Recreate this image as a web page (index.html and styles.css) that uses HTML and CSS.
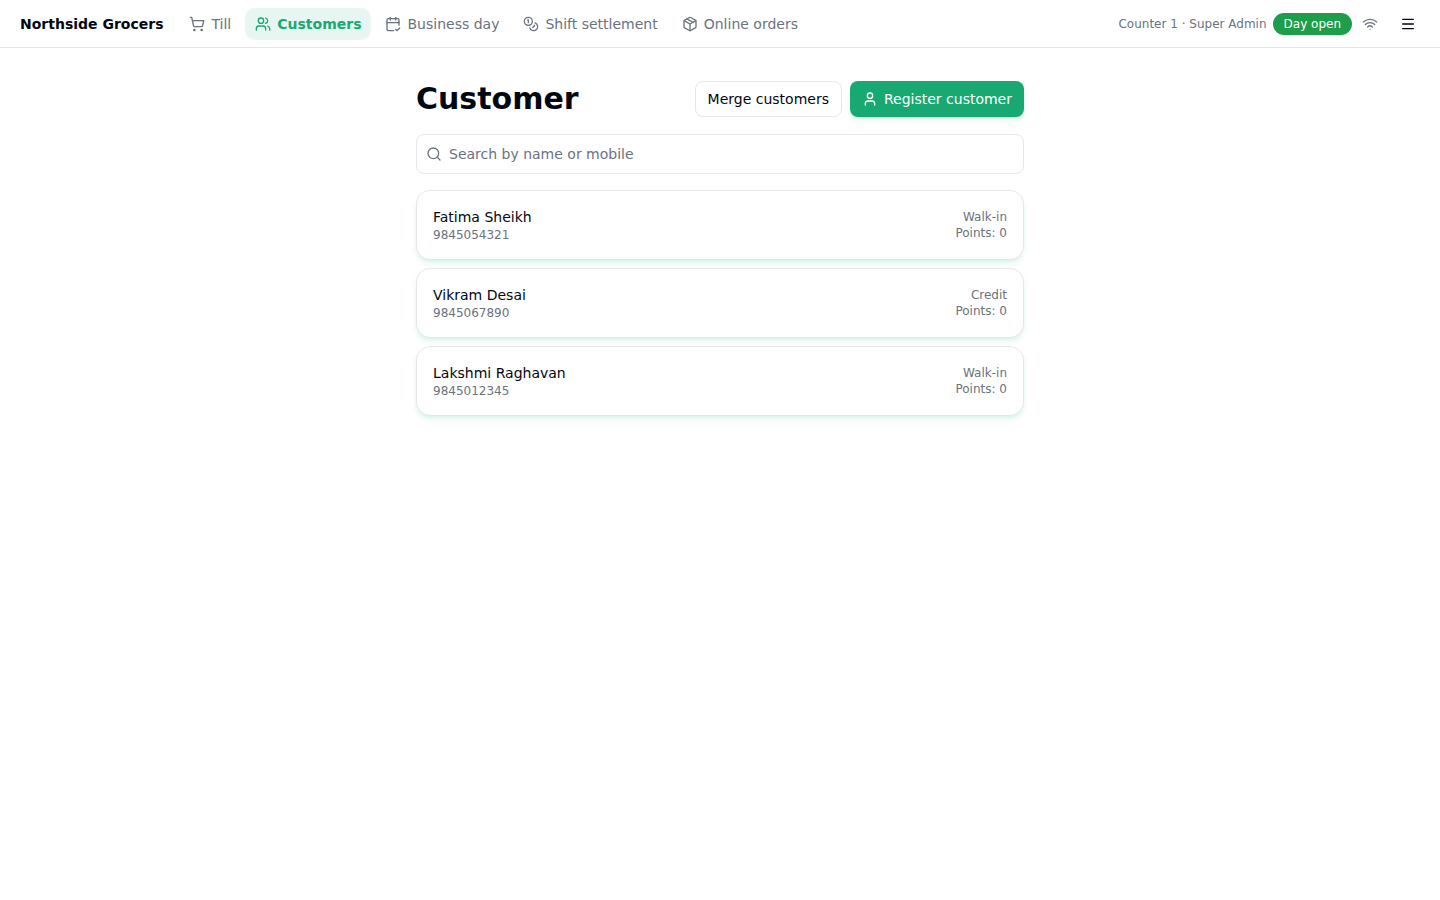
FILE: index.html
```html
<!DOCTYPE html>
<html lang="en">
<head>
<meta charset="utf-8">
<meta name="viewport" content="width=device-width, initial-scale=1">
<title>Customer · Northside Grocers</title>
<link rel="stylesheet" href="styles.css">
</head>
<body>
<header class="topbar">
  <div class="brand">Northside Grocers</div>
  <nav class="nav" aria-label="Main">
    <a class="nav-link" href="#till">
      <svg class="icon" viewBox="0 0 24 24" aria-hidden="true"><circle cx="8" cy="21" r="1"/><circle cx="19" cy="21" r="1"/><path d="M2.05 2.05h2l2.66 12.42a2 2 0 0 0 2 1.58h9.78a2 2 0 0 0 1.95-1.57l1.65-7.43H5.12"/></svg>
      Till</a>
    <a class="nav-link active" href="#customers" aria-current="page">
      <svg class="icon" viewBox="0 0 24 24" aria-hidden="true"><path d="M16 21v-2a4 4 0 0 0-4-4H6a4 4 0 0 0-4 4v2"/><circle cx="9" cy="7" r="4"/><path d="M22 21v-2a4 4 0 0 0-3-3.87"/><path d="M16 3.13a4 4 0 0 1 0 7.75"/></svg>
      Customers</a>
    <a class="nav-link" href="#business-day">
      <svg class="icon" viewBox="0 0 24 24" aria-hidden="true"><path d="M8 2v4"/><path d="M16 2v4"/><path d="M21 14V6a2 2 0 0 0-2-2H5a2 2 0 0 0-2 2v14a2 2 0 0 0 2 2h8"/><path d="M3 10h18"/><path d="m16 20 2 2 4-4"/></svg>
      Business day</a>
    <a class="nav-link" href="#shift-settlement">
      <svg class="icon" viewBox="0 0 24 24" aria-hidden="true"><circle cx="8" cy="8" r="6"/><path d="M18.09 10.37A6 6 0 1 1 10.34 18"/><path d="M7 6h1v4"/><path d="m16.71 13.88.7.71-2.82 2.82"/></svg>
      Shift settlement</a>
    <a class="nav-link" href="#online-orders">
      <svg class="icon" viewBox="0 0 24 24" aria-hidden="true"><path d="M11 21.73a2 2 0 0 0 2 0l7-4A2 2 0 0 0 21 16V8a2 2 0 0 0-1-1.73l-7-4a2 2 0 0 0-2 0l-7 4A2 2 0 0 0 3 8v8a2 2 0 0 0 1 1.73z"/><path d="M12 22V12"/><path d="M3.29 7 12 12l8.71-5"/><path d="m7.5 4.27 9 5.15"/></svg>
      Online orders</a>
  </nav>
  <div class="status">
    <span>Counter 1 · Super Admin</span>
    <span class="badge">Day open</span>
    <span class="network" role="img" aria-label="Online">
      <svg class="icon" viewBox="0 0 24 24" aria-hidden="true"><path d="M12 20h.01"/><path d="M2 8.82a15 15 0 0 1 20 0"/><path d="M5 12.86a10 10 0 0 1 14 0"/><path d="M8.5 16.43a5 5 0 0 1 7 0"/></svg>
    </span>
    <button class="menu-button" type="button" aria-label="Menu">
      <svg class="icon" viewBox="0 0 24 24" aria-hidden="true"><path d="M4 5h16"/><path d="M4 12h16"/><path d="M4 19h16"/></svg>
    </button>
  </div>
</header>
<main class="page">
  <div class="page-head">
    <h1 class="title">Customer</h1>
    <div class="actions">
      <button class="button" type="button">Merge customers</button>
      <button class="button primary" type="button">
        <svg class="icon" viewBox="0 0 24 24" aria-hidden="true"><path d="M19 21v-2a4 4 0 0 0-4-4H9a4 4 0 0 0-4 4v2"/><circle cx="12" cy="7" r="4"/></svg>
        Register customer</button>
    </div>
  </div>
  <label class="search">
    <svg class="icon" viewBox="0 0 24 24" aria-hidden="true"><circle cx="11" cy="11" r="8"/><path d="m21 21-4.3-4.3"/></svg>
    <input class="search-input" type="search" placeholder="Search by name or mobile" aria-label="Search by name or mobile">
  </label>
  <ul class="customers">
    <li><a class="card" href="#fatima-sheikh">
      <span class="person"><span class="name">Fatima Sheikh</span><span class="meta">9845054321</span></span>
      <span class="meta account"><span>Walk-in</span><span>Points: 0</span></span>
    </a></li>
    <li><a class="card" href="#vikram-desai">
      <span class="person"><span class="name">Vikram Desai</span><span class="meta">9845067890</span></span>
      <span class="meta account"><span>Credit</span><span>Points: 0</span></span>
    </a></li>
    <li><a class="card" href="#lakshmi-raghavan">
      <span class="person"><span class="name">Lakshmi Raghavan</span><span class="meta">9845012345</span></span>
      <span class="meta account"><span>Walk-in</span><span>Points: 0</span></span>
    </a></li>
  </ul>
</main>
</body>
</html>
```
FILE: styles.css
```css
:root {
  --ink: #030712;
  --muted: #6b7280;
  --line: #e5e7eb;
  --green: #18a973;
  --shadow: 0 4px 6px -1px rgba(24, 169, 115, 0.12), 0 2px 4px -2px rgba(24, 169, 115, 0.12);
}

* { box-sizing: border-box; }

body {
  margin: 0;
  min-height: 100vh;
  background: #fff;
  color: var(--ink);
  font: 14px/20px "DejaVu Sans", sans-serif;
}

a { color: inherit; text-decoration: none; }

button, input { font: inherit; color: inherit; }

.icon {
  display: block;
  flex: none;
  width: 16px;
  height: 16px;
  fill: none;
  stroke: currentColor;
  stroke-width: 2;
  stroke-linecap: round;
  stroke-linejoin: round;
}

.topbar {
  display: flex;
  align-items: center;
  gap: 16px;
  padding: 8px 16px 7px 20px;
  border-bottom: 1px solid var(--line);
}

.brand { font-weight: 700; white-space: nowrap; }

.nav { display: flex; gap: 4px; }

.nav-link {
  display: flex;
  align-items: center;
  gap: 6px;
  padding: 6px 10px;
  border-radius: 10px;
  color: var(--muted);
  white-space: nowrap;
}

.nav-link.active {
  background: #e8f6f1;
  color: var(--green);
  font-weight: 700;
}

.status {
  display: flex;
  align-items: center;
  gap: 6px;
  margin-left: auto;
  color: var(--muted);
  font-size: 12px;
  line-height: 16px;
  white-space: nowrap;
}

.badge {
  padding: 3px 11px;
  border-radius: 11px;
  background: #1e9d4a;
  color: #fff;
}

.network { padding: 4px; }

.menu-button {
  display: grid;
  place-items: center;
  width: 32px;
  height: 32px;
  margin-left: 4px;
  padding: 0;
  border: 0;
  border-radius: 8px;
  background: transparent;
  color: var(--ink);
}

.page {
  display: flex;
  flex-direction: column;
  gap: 16px;
  max-width: 640px;
  margin: 0 auto;
  padding: 32px 16px;
}

.page-head {
  display: flex;
  align-items: center;
  justify-content: space-between;
  gap: 16px;
}

.title { margin: 0; font-size: 30px; line-height: 38px; }

.actions { display: flex; gap: 8px; }

.button {
  display: flex;
  align-items: center;
  gap: 6px;
  padding: 7px 12px;
  border: 1px solid var(--line);
  border-radius: 8px;
  background: #fff;
}

.button.primary {
  padding: 8px 12px;
  border: 0;
  background: var(--green);
  color: #fff;
  box-shadow: var(--shadow);
}

.search {
  display: flex;
  align-items: center;
  gap: 7px;
  padding: 9px;
  border: 1px solid var(--line);
  border-radius: 8px;
  color: var(--muted);
}

.search-input {
  flex: 1;
  height: 20px;
  padding: 0;
  border: 0;
  outline: 0;
  background: transparent;
  color: var(--ink);
}

.search-input::placeholder { color: var(--muted); opacity: 1; }

.customers {
  display: grid;
  gap: 8px;
  margin: 0;
  padding: 0;
  list-style: none;
}

.card {
  display: flex;
  align-items: center;
  justify-content: space-between;
  padding: 16px;
  border: 1px solid var(--line);
  border-radius: 14px;
  background: #fff;
  box-shadow: var(--shadow);
}

.person, .account { display: flex; flex-direction: column; }

.meta { color: var(--muted); font-size: 12px; line-height: 16px; }

.account { text-align: right; }
```
